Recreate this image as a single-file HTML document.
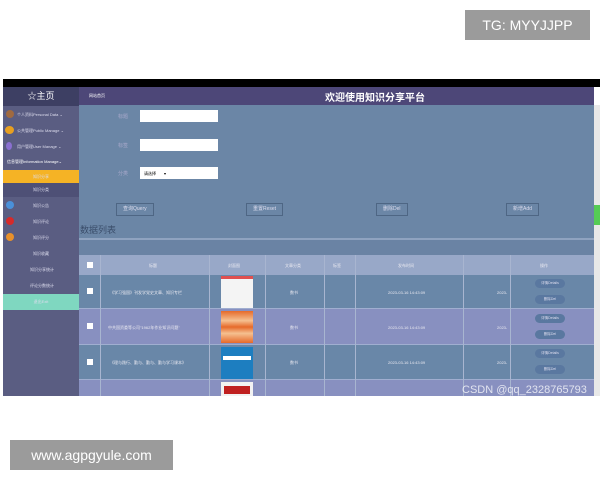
<!DOCTYPE html>
<html><head><meta charset="utf-8"><style>
*{margin:0;padding:0;box-sizing:border-box}
body{width:600px;height:480px;background:#fff;position:relative;overflow:hidden;font-family:"Liberation Sans","Noto Sans CJK SC",sans-serif}
.a{position:absolute}
.tg{left:465px;top:10px;width:125px;height:30px;background:#9b9b9b;color:#fff;font-size:14px;line-height:30px;text-align:center}
.www{left:10px;top:440px;width:163px;height:30px;background:#9b9b9b;color:#fff;font-size:14px;line-height:30px;text-align:center}
.blk{left:3px;top:79px;width:597px;height:8px;background:#000}
.side{left:3px;top:87px;width:76px;height:309px;background:#5a5d82}
.logo{left:3px;top:87px;width:76px;height:19px;background:#3d3f63;color:#fff;font-size:9px;line-height:19px;text-align:center}
.mi{left:3px;width:76px;color:#dde;font-size:4px;line-height:14px;padding-left:14px;white-space:nowrap}
.hdr{left:79px;top:87px;width:515px;height:18px;background:#4d4778;color:#fff}
.main{left:79px;top:105px;width:515px;height:291px;background:#6b86a6}
.sb{left:594px;top:105px;width:6px;height:291px;background:#e8e8e8}
.inp{background:#fff;height:12px;width:78px;left:140px}
.lbl{color:#aac;font-size:5px;left:118px}
.btn{border:1px solid #4e6684;color:#dde;font-size:5px;height:13px;line-height:11px;padding:0 6px}
.ab{background:#5a78a0;border-radius:7px;width:30px;height:9px;color:#dde;font-size:3.5px;line-height:9px;text-align:center;left:535px}
.txt{color:#e8e8f0;font-size:4px}
</style></head><body>
<div class="a tg">TG: MYYJJPP</div>
<div class="a www">www.agpgyule.com</div>
<div class="a blk"></div>
<div class="a side"></div>
<div class="a logo">☆主页</div>
<div class="a mi" style="top:108px">个人资料Personal Data ⌄</div>
<div class="a mi" style="top:124px">公共管理Public Manage ⌄</div>
<div class="a mi" style="top:140px">用户管理User Manage ⌄</div>
<div class="a mi" style="top:155px;padding-left:4px;color:#fff">信息管理Information Manage⌄</div>
<div class="a mi" style="top:170px;height:13px;background:#f5b325;text-align:center;padding:0;line-height:13px">知识分享</div>
<div class="a mi" style="top:183px;height:14px;background:#4e5076;text-align:center;padding:0">知识分类</div>
<div class="a mi" style="top:199px;padding-left:30px">知识公告</div>
<div class="a mi" style="top:215px;padding-left:30px">知识评论</div>
<div class="a mi" style="top:231px;padding-left:30px">知识评分</div>
<div class="a mi" style="top:247px;padding-left:30px">知识收藏</div>
<div class="a mi" style="top:263px;padding-left:27px">知识分享统计</div>
<div class="a mi" style="top:279px;padding-left:27px">评论分数统计</div>
<div class="a mi" style="top:294px;height:16px;background:#7fd7c0;text-align:center;padding:0;line-height:16px">退出Exit</div>
<div class="a" style="left:6px;top:110px;width:8px;height:8px;border-radius:50%;background:#a06a40"></div>
<div class="a" style="left:5px;top:126px;width:9px;height:8px;border-radius:50%;background:#e8a020"></div>
<div class="a" style="left:6px;top:142px;width:6px;height:8px;border-radius:50%;background:#8a70d0"></div>
<div class="a" style="left:6px;top:201px;width:8px;height:8px;border-radius:50%;background:#4a90d9"></div>
<div class="a" style="left:6px;top:217px;width:8px;height:8px;border-radius:50%;background:#d62a2a"></div>
<div class="a" style="left:6px;top:233px;width:8px;height:8px;border-radius:50%;background:#e8902a"></div>
<div class="a hdr"><span class="a" style="left:10px;top:6px;font-size:4px">网站首页</span><span class="a" style="left:246px;top:2px;font-size:10px;font-weight:bold">欢迎使用知识分享平台</span></div>
<div class="a main"></div>
<div class="a sb"><div class="a" style="left:0;top:100px;width:6px;height:20px;background:#5c5"></div></div>
<div class="a lbl" style="top:113px">标题</div><div class="a inp" style="top:110px"></div>
<div class="a lbl" style="top:142px">标签</div><div class="a inp" style="top:139px"></div>
<div class="a lbl" style="top:170px">分类</div><div class="a inp" style="top:167px;font-size:4px;padding:4px 4px">请选择　　▾</div>
<div class="a btn" style="left:116px;top:203px">查询Query</div>
<div class="a btn" style="left:246px;top:203px">重置Reset</div>
<div class="a btn" style="left:376px;top:203px">删除Del</div>
<div class="a btn" style="left:506px;top:203px">新增Add</div>
<div class="a" style="left:80px;top:223px;color:#3a4d6a;font-size:9px">数据列表</div>
<div class="a" style="left:79px;top:238px;width:515px;height:2px;background:#8fa3c0"></div>
<div class="a" style="left:79px;top:240px;width:515px;height:15px;background:#6a83a4"></div>
<div class="a" style="left:79px;top:255px;width:515px;height:20px;background:#98a8c8"></div>
<div class="a" style="left:79px;top:275px;width:515px;height:34px;background:#6987a8"></div>
<div class="a" style="left:79px;top:309px;width:515px;height:36px;background:#8890c0"></div>
<div class="a" style="left:79px;top:345px;width:515px;height:35px;background:#6987a8"></div>
<div class="a" style="left:79px;top:380px;width:515px;height:16px;background:#8890c0"></div>
<div class="a" style="left:79px;top:308px;width:515px;height:1px;background:#a0aed0"></div>
<div class="a" style="left:79px;top:344px;width:515px;height:1px;background:#a0aed0"></div>
<div class="a" style="left:79px;top:379px;width:515px;height:1px;background:#a0aed0"></div>
<div class="a" style="left:100px;top:255px;width:1px;height:141px;background:#a8b5d0"></div>
<div class="a" style="left:209px;top:255px;width:1px;height:141px;background:#a8b5d0"></div>
<div class="a" style="left:265px;top:255px;width:1px;height:141px;background:#a8b5d0"></div>
<div class="a" style="left:324px;top:255px;width:1px;height:141px;background:#a8b5d0"></div>
<div class="a" style="left:355px;top:255px;width:1px;height:141px;background:#a8b5d0"></div>
<div class="a" style="left:463px;top:255px;width:1px;height:141px;background:#a8b5d0"></div>
<div class="a" style="left:510px;top:255px;width:1px;height:141px;background:#a8b5d0"></div>
<div class="a txt" style="left:149px;top:263px">标题</div>
<div class="a txt" style="left:228px;top:263px">封面图</div>
<div class="a txt" style="left:285px;top:263px">文章分类</div>
<div class="a txt" style="left:333px;top:263px">标签</div>
<div class="a txt" style="left:398px;top:263px">发布时间</div>
<div class="a txt" style="left:540px;top:263px">操作</div>
<div class="a" style="left:87px;top:262px;width:6px;height:6px;background:#fff"></div>
<div class="a" style="left:87px;top:288px;width:6px;height:6px;background:#fff"></div>
<div class="a" style="left:87px;top:323px;width:6px;height:6px;background:#fff"></div>
<div class="a" style="left:87px;top:359px;width:6px;height:6px;background:#fff"></div>
<div class="a txt" style="left:110px;top:290px">《学习强国》刊发学党史文章、知识专栏</div>
<div class="a txt" style="left:108px;top:325px">中共国资委等公司"1962年作业知识问题"</div>
<div class="a txt" style="left:110px;top:360px">《理与践行、勤与、勤与、勤与学习课本》</div>
<div class="a" style="left:221px;top:276px;width:32px;height:32px;background:#f4f4f4;border-top:3px solid #e05050"></div>
<div class="a" style="left:221px;top:311px;width:32px;height:32px;background:linear-gradient(#e66a2a,#f5c090 30%,#e66a2a 50%,#f5c090 70%,#e66a2a)"></div>
<div class="a" style="left:221px;top:347px;width:32px;height:32px;background:#1d7ec0"><div class="a" style="left:2px;top:9px;width:28px;height:4px;background:#fff"></div></div>
<div class="a" style="left:221px;top:382px;width:32px;height:14px;background:#f2f2f2"><div class="a" style="left:3px;top:4px;width:26px;height:8px;background:#c02020"></div></div>
<div class="a txt" style="left:290px;top:290px">数书</div>
<div class="a txt" style="left:290px;top:325px">数书</div>
<div class="a txt" style="left:290px;top:360px">数书</div>
<div class="a txt" style="left:388px;top:290px">2023-03-16 14:43:09</div>
<div class="a txt" style="left:388px;top:325px">2023-03-16 14:43:09</div>
<div class="a txt" style="left:388px;top:360px">2023-03-16 14:43:09</div>
<div class="a txt" style="left:497px;top:290px">2023-</div>
<div class="a txt" style="left:497px;top:325px">2023-</div>
<div class="a txt" style="left:497px;top:360px">2023-</div>
<div class="a ab" style="top:279px">详情Details</div><div class="a ab" style="top:295px">删除Del</div>
<div class="a ab" style="top:314px">详情Details</div><div class="a ab" style="top:330px">删除Del</div>
<div class="a ab" style="top:349px">详情Details</div><div class="a ab" style="top:365px">删除Del</div>
<div class="a" style="left:462px;top:384px;color:#fff;font-size:11px;opacity:.75">CSDN @qq_2328765793</div>
</body></html>
